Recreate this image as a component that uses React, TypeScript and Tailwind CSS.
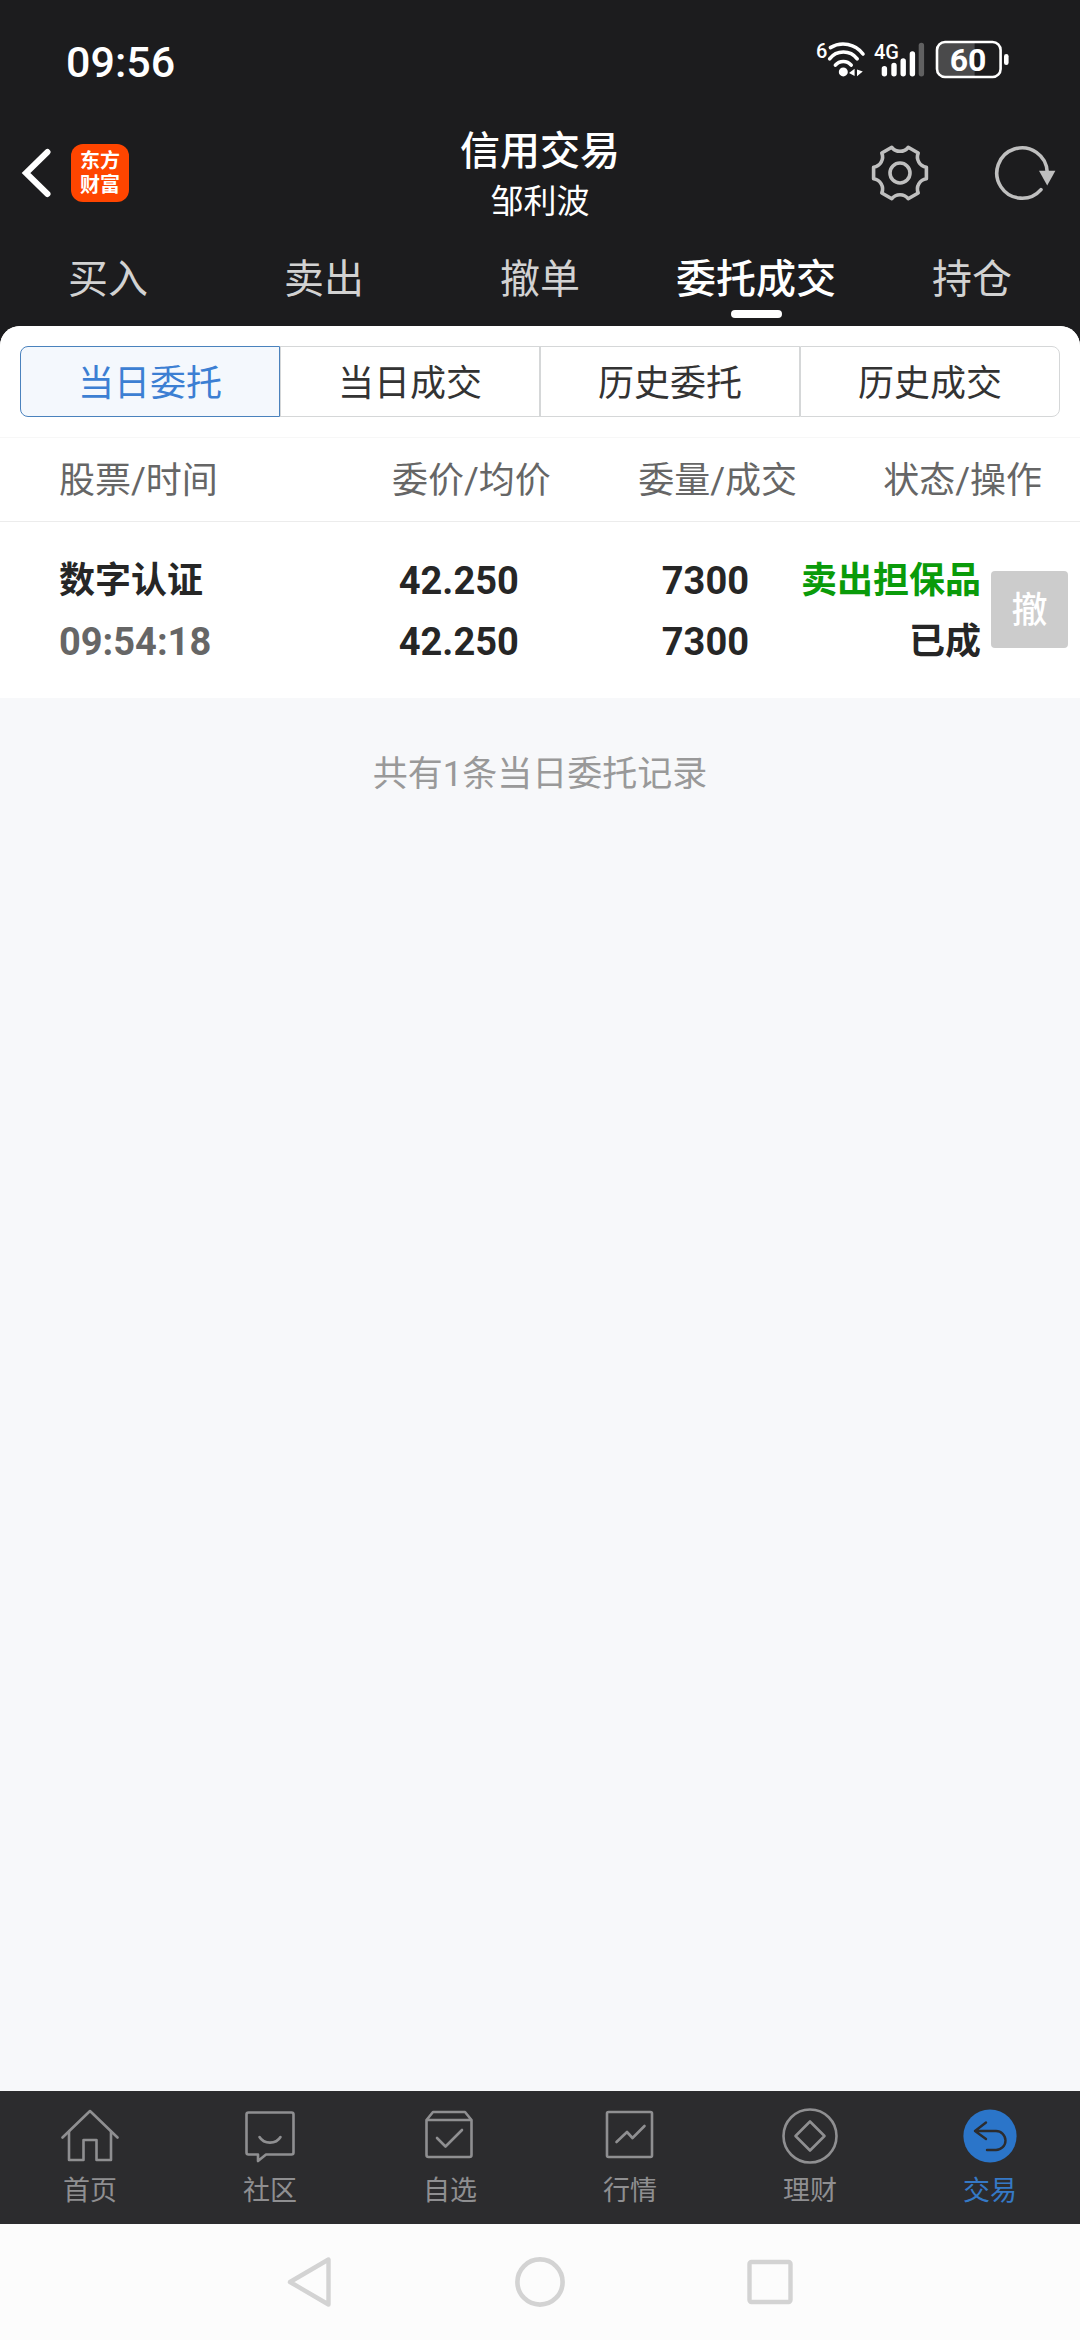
import { useState } from 'react';
import type { ReactNode } from 'react';
import clsx from 'clsx';

const TOP_TABS = ['买入', '卖出', '撤单', '委托成交', '持仓'];

const SEGMENTS = ['当日委托', '当日成交', '历史委托', '历史成交'];

const ORDERS = [
  {
    name: '数字认证',
    time: '09:54:18',
    price: '42.250',
    average: '42.250',
    amount: '7300',
    filled: '7300',
    side: '卖出担保品',
    status: '已成',
  },
];

function WifiIcon() {
  return (
    <svg viewBox="0 0 50 40" className="h-10 w-[50px]" fill="none" stroke="#fff" strokeWidth="3.6" strokeLinecap="round">
      <text x="0" y="18" fill="#fff" stroke="none" fontSize="20" fontWeight="500">6</text>
      <path d="M14.4 7.6A24.6 24.6 0 0 1 47 14" />
      <path d="M13.6 18.8A17.5 17.5 0 0 1 41.2 18.8" />
      <path d="M19.4 25.2A10.2 10.2 0 0 1 35.2 25.2" />
      <circle cx="27.3" cy="31.9" r="4.5" fill="#fff" stroke="none" />
      <path d="M33 33L38.6 28.8V36ZM41 29.4L46.8 31.4L41 36.2Z" fill="#fff" stroke="none" />
    </svg>
  );
}

function SignalIcon() {
  return (
    <svg viewBox="0 0 52 40" className="h-10 w-[52px]" fill="none" stroke="#fff" strokeWidth="5.4" strokeLinecap="round">
      <text x="0" y="19" fill="#fff" stroke="none" fontSize="20" fontWeight="500">4G</text>
      <path d="M10.4 28.6V33.8M20 25.4V33.8M29.2 21V33.8M38.4 14V33.8" />
      <path d="M47.4 5.4V33.8" stroke="#606061" />
    </svg>
  );
}

function BatteryIcon() {
  return (
    <svg viewBox="0 0 76 40" className="h-10 w-[76px]" fill="none">
      <path d="M10 2H40.6V37H10A7 7 0 0 1 3 30V9A7 7 0 0 1 10 2Z" fill="#4a4a4b" />
      <rect x="3" y="2" width="63.6" height="35" rx="8" stroke="#fff" strokeWidth="2.6" />
      <rect x="70" y="14" width="4.6" height="11" rx="2.3" fill="#fff" />
      <text x="34" y="31" textAnchor="middle" fill="#fff" fontSize="32" fontWeight="700">60</text>
    </svg>
  );
}

function GearIcon() {
  return (
    <svg viewBox="-30 -30 60 60" className="size-[60px]" fill="none" stroke="#bfbfbf" strokeWidth="3.6" strokeLinejoin="round">
      <path d="M26.4 -5.8V5.8A10.4 10.4 0 0 0 18.2 20L8.2 25.7A10.4 10.4 0 0 0 -8.2 25.7L-18.2 20A10.4 10.4 0 0 0 -26.4 5.8V-5.8A10.4 10.4 0 0 0 -18.2 -20L-8.2 -25.7A10.4 10.4 0 0 0 8.2 -25.7L18.2 -20A10.4 10.4 0 0 0 26.4 -5.8Z" />
      <circle r="10" />
    </svg>
  );
}

function RefreshIcon() {
  return (
    <svg viewBox="0 0 64 64" className="size-16" fill="none">
      <path d="M53.2 31A25.2 25.2 0 1 0 47 48.6" stroke="#bfbfbf" strokeWidth="3.6" strokeLinecap="round" />
      <path d="M45 29.8H61.4L53.2 44.4Z" fill="#bfbfbf" />
    </svg>
  );
}

const NAV_ITEMS: { label: string; icon: ReactNode }[] = [
  {
    label: '首页',
    icon: (
      <>
        <path d="M1.5 30.5L29 4L56.5 30.5" />
        <path d="M8 24.5V53H22.5V33H35.5V53H50V24.5" />
      </>
    ),
  },
  {
    label: '社区',
    icon: (
      <>
        <path d="M7.5 5.5H50.5A2 2 0 0 1 52.5 7.5V45.5A2 2 0 0 1 50.5 47.5H25L17 54V47.5H7.5A2 2 0 0 1 5.5 45.5V7.5A2 2 0 0 1 7.5 5.5Z" />
        <path d="M18.5 30C23 37.5 35 37.5 39.5 30" />
      </>
    ),
  },
  {
    label: '自选',
    icon: (
      <>
        <path d="M5.5 13L12 5H44L50.5 13V48A2 2 0 0 1 48.5 50H7.5A2 2 0 0 1 5.5 48ZM5.5 13H50.5" />
        <path d="M16 31L24.5 39.5L41 23" />
      </>
    ),
  },
  {
    label: '行情',
    icon: (
      <>
        <rect x="6" y="5" width="45" height="45" rx="1.5" />
        <path d="M15.5 35L26 25L31.5 31L43.5 19" />
      </>
    ),
  },
  {
    label: '理财',
    icon: (
      <>
        <circle cx="29" cy="29" r="26.5" />
        <path d="M29 14.5L43.5 29L29 43.5L14.5 29Z" />
      </>
    ),
  },
  {
    label: '交易',
    icon: (
      <>
        <circle cx="29" cy="29" r="26.6" fill="#2b75c9" stroke="none" />
        <path d="M25 15.5L14 24L25 32M14 24H35A9.5 9.5 0 0 1 35 43H26" stroke="#2c2c2e" strokeWidth="2.4" />
      </>
    ),
  },
];

function StatusBar() {
  return (
    <div className="flex h-[120px] items-center justify-between pr-[70px] pl-[66px] text-white">
      <span className="pt-1 text-[43px] font-medium">09:56</span>
      <div className="flex items-center gap-2">
        <WifiIcon />
        <SignalIcon />
        <BatteryIcon />
      </div>
    </div>
  );
}

function Header() {
  return (
    <header className="grid h-[104px] grid-cols-[1fr_auto_1fr] items-center">
      <div className="flex items-center gap-5 pl-5">
        <button type="button" aria-label="返回">
          <svg viewBox="0 0 31 52" className="h-[52px] w-[31px]" fill="none" stroke="#fff" strokeWidth="6" strokeLinecap="round">
            <path d="M27.5 5L6 26L27.5 47" />
          </svg>
        </button>
        <a href="#home" className="flex size-[58px] flex-col items-center justify-center rounded-xl bg-[#ff4500] text-xl leading-6 font-bold text-white">
          <span>东方</span>
          <span>财富</span>
        </a>
      </div>
      <div className="pt-1.5 text-center text-white">
        <h1 className="text-[40px] leading-[52px] font-medium">信用交易</h1>
        <p className="text-[33px] leading-[48px]">邹利波</p>
      </div>
      <div className="flex items-center justify-end gap-16 pr-[22px]">
        <button type="button" aria-label="设置">
          <GearIcon />
        </button>
        <button type="button" aria-label="刷新">
          <RefreshIcon />
        </button>
      </div>
    </header>
  );
}

function OrderTable() {
  return (
    <table className="w-full table-fixed border-collapse bg-white text-[36px]">
      <colgroup>
        <col className="w-[28.2%]" />
        <col className="w-[22.8%]" />
        <col className="w-[22.8%]" />
        <col className="w-[26.2%]" />
      </colgroup>
      <thead>
        <tr className="h-[84px] border-y border-t-[#f7f7f7] border-b-[#ececec] text-[#666]">
          <th className="pt-0.5 pl-[59px] text-left font-normal">股票/时间</th>
          <th className="pt-0.5 text-right font-normal">委价/均价</th>
          <th className="pt-0.5 text-right font-normal">委量/成交</th>
          <th className="pt-0.5 pr-[38px] text-right font-normal">状态/操作</th>
        </tr>
      </thead>
      <tbody>
        {ORDERS.map((order) => (
          <tr key={order.time} className="h-44 leading-[61px] font-bold text-[#262626]">
            <td className="pt-1 pl-[59px]">
              <p>{order.name}</p>
              <p className="text-[38px] text-[#666]">{order.time}</p>
            </td>
            <td className="pt-1 pr-8 text-right text-[38px]">
              <p>{order.price}</p>
              <p>{order.average}</p>
            </td>
            <td className="pt-1 pr-12 text-right text-[38px]">
              <p>{order.amount}</p>
              <p>{order.filled}</p>
            </td>
            <td className="pr-3">
              <div className="flex items-center justify-end gap-2.5">
                <div className="pt-1 text-right whitespace-nowrap">
                  <p className="text-[#0a9b0a]">{order.side}</p>
                  <p>{order.status}</p>
                </div>
                <button type="button" disabled className="size-[77px] shrink-0 rounded-sm bg-[#ccc] pt-1 text-[36px] font-medium text-white">
                  撤
                </button>
              </div>
            </td>
          </tr>
        ))}
      </tbody>
    </table>
  );
}

function BottomNav() {
  return (
    <nav className="grid h-[133px] grid-cols-6 bg-[#2c2c2e]">
      {NAV_ITEMS.map((item) => (
        <a
          key={item.label}
          href={`#${item.label}`}
          className={clsx(
            'flex flex-col items-center pt-4',
            item.label === '交易' ? 'text-[#3579c6]' : 'text-[#8f8f91]'
          )}
        >
          <svg viewBox="0 0 58 58" className="size-[58px]" fill="none" stroke="currentColor" strokeWidth="2.6" strokeLinecap="round" strokeLinejoin="round">
            {item.icon}
          </svg>
          <span className="mt-1.5 text-[27px] leading-10">{item.label}</span>
        </a>
      ))}
    </nav>
  );
}

function SystemKeys() {
  return (
    <div className="grid h-[116px] grid-cols-3 place-items-center bg-[#fcfcfc] px-[18%]">
      <button type="button" aria-label="后退">
        <svg viewBox="0 0 52 52" className="size-[52px]" fill="none" stroke="#d3d3d3" strokeWidth="4.4" strokeLinejoin="round">
          <path d="M6 26L44.5 3.5V48.5Z" />
        </svg>
      </button>
      <button type="button" aria-label="主屏幕">
        <svg viewBox="0 0 52 52" className="size-[52px]" fill="none" stroke="#d3d3d3" strokeWidth="4.6">
          <circle cx="26" cy="26" r="22.6" />
        </svg>
      </button>
      <button type="button" aria-label="最近任务">
        <svg viewBox="0 0 52 52" className="size-[52px]" fill="none" stroke="#d3d3d3" strokeWidth="4.4">
          <rect x="5.5" y="6" width="41" height="40" rx="2" />
        </svg>
      </button>
    </div>
  );
}

export default function App() {
  const [tab, setTab] = useState('委托成交');
  const [segment, setSegment] = useState('当日委托');

  return (
    <div className="flex min-h-screen flex-col bg-[#1c1c1e] font-[Roboto,'Noto_Sans_CJK_SC',sans-serif]">
      <StatusBar />
      <Header />
      <div className="grid h-[102px] grid-cols-5 pt-[26px]">
        {TOP_TABS.map((label) => (
          <button
            key={label}
            type="button"
            onClick={() => setTab(label)}
            className={clsx(
              'flex flex-col items-center text-[40px] leading-[60px]',
              tab === label ? 'font-medium text-white' : 'text-[#d2d2d2]'
            )}
          >
            {label}
            {tab === label && <span className="h-2 w-[51px] rounded-full bg-white" />}
          </button>
        ))}
      </div>

      <main className="flex-1 overflow-hidden rounded-t-[20px] bg-[#f7f8fa]">
        <div className="bg-white px-5 py-5">
          <div className="grid h-[71px] grid-cols-4">
            {SEGMENTS.map((label) => (
              <button
                key={label}
                type="button"
                onClick={() => setSegment(label)}
                className={clsx(
                  'border pt-1 text-[36px] first:rounded-l-lg last:rounded-r-lg',
                  segment === label ? 'border-[#4a82bd] bg-[#f4f8fd] text-[#3c7fd3]' : 'border-[#d5d7d8] text-[#333]'
                )}
              >
                {label}
              </button>
            ))}
          </div>
        </div>
        <OrderTable />
        <p className="pt-[50px] text-center text-[35px] leading-[54px] text-[#999]">共有1条当日委托记录</p>
      </main>

      <BottomNav />
      <SystemKeys />
    </div>
  );
}
